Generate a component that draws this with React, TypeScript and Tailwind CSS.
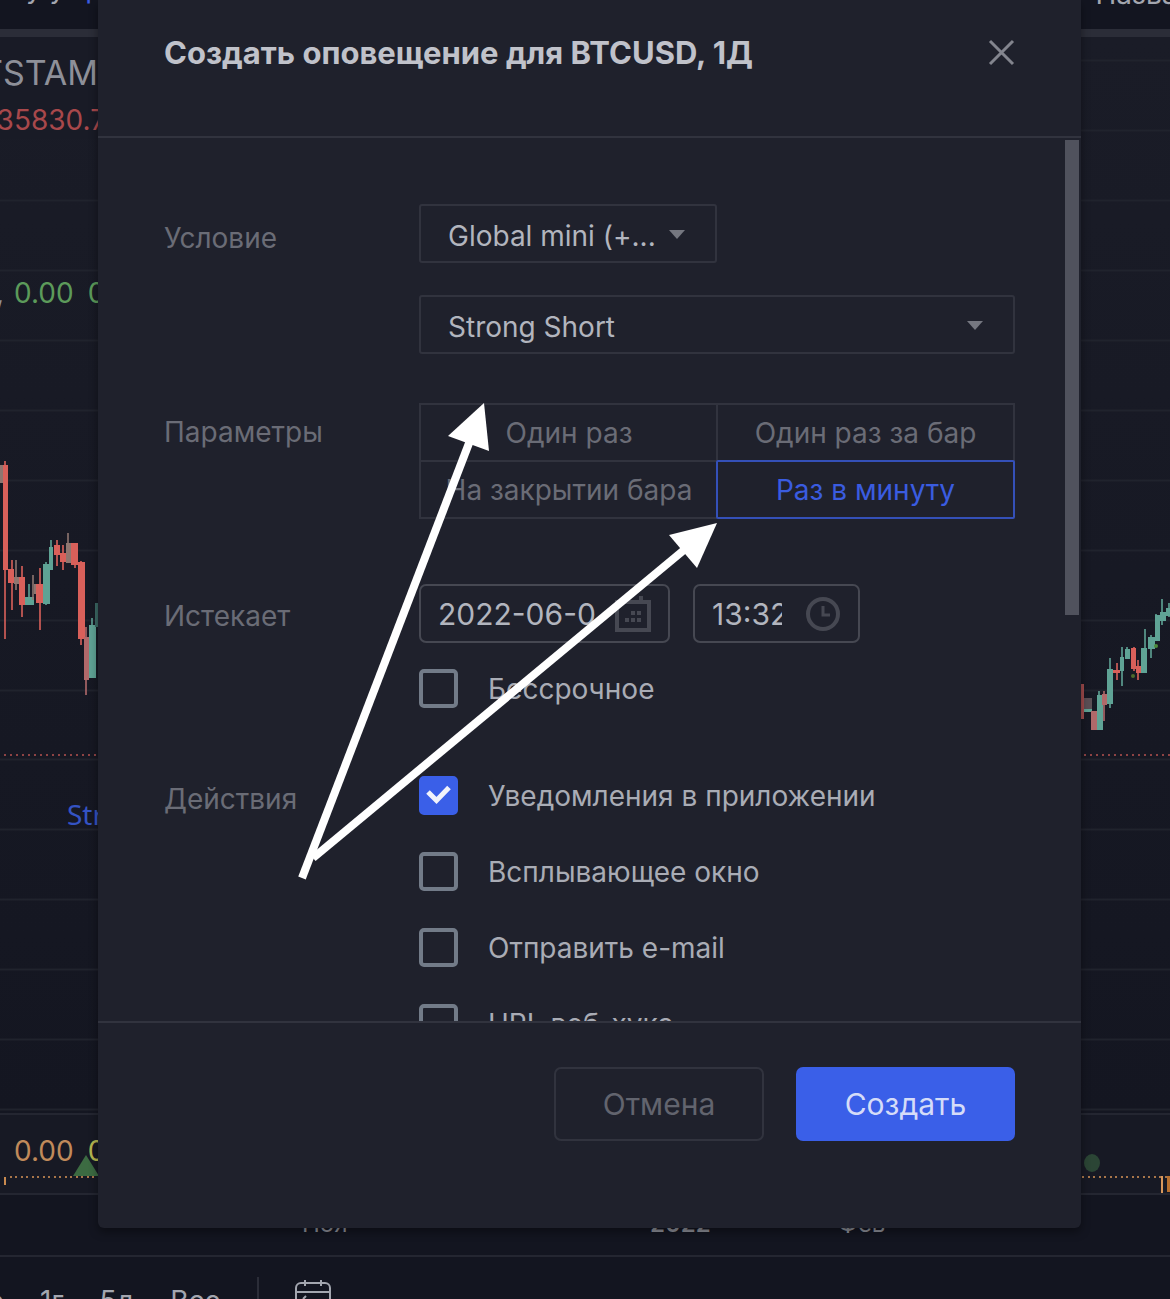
import React, { useState } from 'react';

interface Candle {
  x: number;
  w: number;
  top: number;
  bottom: number;
  wick?: [number, number, number];
  color: string;
}

const RED = '#d9605a';
const GREEN = '#5fa395';
const MUTED = '#8f7670';
const ROSE = '#b0696a';

const leftCandles: Candle[] = [
  { x: 0, w: 4, top: 428, bottom: 446, color: MUTED },
  { x: 3, w: 5, top: 428, bottom: 533, wick: [5, 424, 602], color: RED },
  { x: 8, w: 6, top: 532, bottom: 546, wick: [12, 523, 573], color: RED },
  { x: 14, w: 6, top: 540, bottom: 547, wick: [16, 523, 553], color: MUTED },
  { x: 19, w: 6, top: 540, bottom: 568, wick: [22, 529, 580], color: RED },
  { x: 25, w: 9, top: 560, bottom: 568, wick: [29, 547, 568], color: GREEN },
  { x: 34, w: 3, top: 547, bottom: 557, wick: [33, 538, 563], color: MUTED },
  { x: 36, w: 7, top: 547, bottom: 566, wick: [40, 531, 593], color: RED },
  { x: 43, w: 7, top: 527, bottom: 567, wick: [46, 525, 568], color: GREEN },
  { x: 49, w: 4, top: 510, bottom: 533, wick: [51, 503, 533], color: GREEN },
  { x: 54, w: 6, top: 508, bottom: 518, wick: [57, 503, 529], color: RED },
  { x: 60, w: 6, top: 516, bottom: 525, wick: [63, 508, 533], color: RED },
  { x: 66, w: 6, top: 506, bottom: 526, wick: [68, 496, 526], color: MUTED },
  { x: 71, w: 7, top: 506, bottom: 528, wick: [75, 506, 531], color: RED },
  { x: 78, w: 7, top: 525, bottom: 602, wick: [81, 524, 608], color: RED },
  { x: 84, w: 5, top: 600, bottom: 643, wick: [86, 590, 658], color: ROSE },
  { x: 89, w: 7, top: 588, bottom: 641, wick: [92, 581, 641], color: GREEN },
  { x: 95, w: 4, top: 566, bottom: 590, color: '#3d6a66' },
];

const rightCandles: Candle[] = [
  { x: 0, w: 3, top: 647, bottom: 682, color: '#a04b4c' },
  { x: 3, w: 8, top: 661, bottom: 673, color: '#5b4f55' },
  { x: 3, w: 8, top: 672, bottom: 675, color: GREEN },
  { x: 10, w: 6, top: 674, bottom: 693, color: ROSE },
  { x: 16, w: 6, top: 658, bottom: 693, wick: [18, 654, 693], color: GREEN },
  { x: 21, w: 5, top: 657, bottom: 668, wick: [23, 654, 684], color: ROSE },
  { x: 26, w: 6, top: 632, bottom: 667, wick: [29, 621, 671], color: GREEN },
  { x: 32, w: 7, top: 633, bottom: 636, wick: [36, 626, 643], color: RED },
  { x: 39, w: 4, top: 620, bottom: 634, wick: [41, 610, 649], color: GREEN },
  { x: 44, w: 5, top: 612, bottom: 622, wick: [46, 610, 622], color: GREEN },
  { x: 50, w: 5, top: 611, bottom: 632, wick: [53, 610, 634], color: RED },
  { x: 55, w: 5, top: 629, bottom: 636, wick: [57, 623, 643], color: RED },
  { x: 60, w: 6, top: 611, bottom: 636, wick: [64, 592, 636], color: GREEN },
  { x: 67, w: 7, top: 600, bottom: 612, wick: [70, 598, 621], color: GREEN },
  { x: 74, w: 5, top: 578, bottom: 604, wick: [75, 577, 604], color: GREEN },
  { x: 79, w: 6, top: 575, bottom: 584, wick: [81, 562, 588], color: GREEN },
  { x: 85, w: 4, top: 571, bottom: 579, wick: [88, 566, 580], color: GREEN },
];

const gridLines = [23, 93, 163, 233, 303, 373, 443, 513, 583, 653, 722, 792, 862, 932, 1002, 1072];

const Candles: React.FC<{ data: Candle[] }> = ({ data }) => (
  <>
    {data.map((c, index) => (
      <g key={index} fill={c.color}>
        {c.wick && <rect x={c.wick[0] - 1} y={c.wick[1]} width={2} height={c.wick[2] - c.wick[1]} opacity={0.8} />}
        <rect x={c.x} y={c.top} width={c.w} height={c.bottom - c.top} />
      </g>
    ))}
  </>
);

const ChartBackdrop: React.FC = () => (
  <div className="col-start-1 row-start-1 flex min-w-0 flex-col overflow-hidden bg-[#131520]">
    <div className="flex h-[29px] items-start justify-between overflow-hidden text-[28px] leading-[28px] text-[#a3a6af]">
      <div className="-mt-[26px] flex gap-5 pl-[26px]">
        <span>у у</span>
        <span className="text-[#3a5ce0]">µ</span>
      </div>
      <span className="-mt-5 -mr-6">Назван</span>
    </div>
    <div className="h-2 bg-[#2b2d38]" />

    <div className="relative min-h-[1076px] flex-1 bg-linear-to-b from-[#1a1c27] to-[#141621]">
      <svg className="absolute inset-0 h-full w-full" aria-hidden="true">
        {gridLines.map((y) => (
          <line key={y} x1="0" x2="100%" y1={y + 0.5} y2={y + 0.5} stroke="#20232d" strokeWidth="2" />
        ))}
        <line x1="4" x2="100%" y1="718" y2="718" stroke="#8e4344" strokeWidth="2" strokeDasharray="2 4" />
      </svg>
      <svg className="absolute top-0 left-0 h-full w-[98px]" aria-hidden="true">
        <Candles data={leftCandles} />
      </svg>
      <svg className="absolute top-0 right-0 h-full w-[89px]" aria-hidden="true">
        <Candles data={rightCandles} />
        <circle cx="52" cy="639" r="2" fill="#4d6b2c" />
        <circle cx="75" cy="609" r="2" fill="#4d8b3c" />
      </svg>
      <div className="relative flex w-[98px] flex-col items-end overflow-hidden bg-[#191b26] pt-4 whitespace-nowrap">
        <span className="text-[34px] leading-[40px] text-[#8e9099]">BITSTAM</span>
        <span className="-mr-2 pt-2 text-[28px] leading-[38px] text-[#a8484b]">35830.7</span>
      </div>
      <div className="relative mt-[136px] flex gap-[14px] text-[28px] leading-[36px] text-[#5c9a5a]">
        <span className="-ml-1 w-1 text-[#8e9099]">,</span>
        <span>0.00</span>
        <span>0.00</span>
      </div>
      <span className="absolute top-[759px] left-[67px] font-['Noto_Sans'] text-[28px] leading-[36px] text-[#3453c4]">
        Strong
      </span>
    </div>

    <div className="relative h-[82px] border-y-2 border-[#242631] bg-[#171924]">
      <svg className="absolute inset-0 h-full w-full" aria-hidden="true">
        <path d="M73 61 L86 40 L99 61 Z" fill="#3c6b42" />
        <line x1="10" x2="100%" y1="62" y2="62" stroke="#a9764a" strokeWidth="2" strokeDasharray="2 3 2 4" />
        <rect x="4" y="62" width="2" height="8" fill="#c98a4f" />
      </svg>
      <svg className="absolute top-0 right-0 h-full w-[89px]" aria-hidden="true">
        <ellipse cx="11" cy="48" rx="8" ry="9" fill="#2b4535" />
        <rect x="80" y="61" width="2" height="18" fill="#d9985c" />
        <rect x="86" y="61" width="3" height="16" fill="#b8702f" />
      </svg>
      <div className="relative flex gap-[14px] pt-[18px] pl-[14px] text-[28px] leading-[36px]">
        <span className="text-[#c08a5a]">0.00</span>
        <span className="text-[#b5b54f]">0.00</span>
      </div>
    </div>

    <div className="flex h-[60px] pt-[14px] pl-[302px] text-[24px] leading-[30px] text-[#8e9099]">
      <span className="w-[348px]">Ноя</span>
      <span className="w-[188px] font-semibold">2022</span>
      <span>Фев</span>
    </div>

    <div className="flex h-[45px] gap-9 overflow-hidden border-t-2 border-[#242631] pt-[28px] text-[28px] leading-[32px] text-[#a3a6af]">
      <span className="flex w-1 justify-end">о</span>
      <span>1г</span>
      <span>5д</span>
      <span>Все</span>
      <span className="-mt-2 h-10 w-[2px] bg-[#2b2d38]" />
      <svg className="-mt-[6px] h-9 w-9" viewBox="0 0 36 36" fill="none" stroke="#a3a6af" strokeWidth="2" aria-hidden="true">
        <rect x="1" y="4" width="34" height="30" rx="5" />
        <path d="M1 13h34M10 1v6M26 1v6M8 20l3-3" />
      </svg>
    </div>
  </div>
);

interface DropdownProps {
  label: string;
  value: string;
  wide?: boolean;
}

const Dropdown: React.FC<DropdownProps> = ({ label, value, wide }) => (
  <div className={wide ? 'relative w-full' : 'relative w-1/2'}>
    <select
      aria-label={label}
      className="block h-[59px] w-full appearance-none rounded-[3px] border-2 border-[#31333e] bg-transparent pt-1 pr-14 pl-[27px] text-[28px] text-[#b2b5be]"
    >
      <option>{value}</option>
    </select>
    <svg
      className="pointer-events-none absolute top-[26px] right-8 h-[9px] w-4"
      viewBox="0 0 16 9"
      aria-hidden="true"
    >
      <path d="M0 0h16L8 9z" fill="#757780" />
    </svg>
  </div>
);

interface CheckOptionProps {
  label: string;
  defaultChecked?: boolean;
}

const CheckOption: React.FC<CheckOptionProps> = ({ label, defaultChecked }) => (
  <label className="relative flex h-[39px] items-center gap-[30px] text-[28px] text-[#a9acb5]">
    <input
      type="checkbox"
      defaultChecked={defaultChecked}
      className="peer h-[39px] w-[39px] shrink-0 appearance-none rounded-[5px] border-4 border-[#727b88] checked:border-[#3a5fe8] checked:bg-[#3a5fe8]"
    />
    <svg
      className="pointer-events-none absolute top-0 left-0 hidden h-[39px] w-[39px] peer-checked:block"
      viewBox="0 0 39 39"
      fill="none"
      stroke="#f1f3fb"
      strokeWidth="5"
      aria-hidden="true"
    >
      <path d="M9 16l8.500 8.500L30 11.500" />
    </svg>
    <span>{label}</span>
  </label>
);

const frequencies = ['Один раз', 'Один раз за бар', 'На закрытии бара', 'Раз в минуту'];

const AlertDialog: React.FC = () => {
  const [frequency, setFrequency] = useState('Раз в минуту');

  return (
    <div
      role="dialog"
      aria-labelledby="alert-title"
      className="relative rounded-b-[6px] bg-[#1f212c] shadow-[0_4px_10px_rgba(0,0,0,0.4)]"
    >
      <header className="flex h-[138px] items-start justify-between border-b-2 border-[#31333e] px-[66px] pt-[34px]">
        <h1 id="alert-title" className="text-[31px] leading-[38px] font-bold text-[#c0c2ca]">
          Создать оповещение для BTCUSD, 1Д
        </h1>
        <button type="button" aria-label="Закрыть" className="mt-[5px]">
          <svg className="h-[27px] w-[27px]" viewBox="0 0 27 27" stroke="#83858e" strokeWidth="3" aria-hidden="true">
            <path d="M2 2l23 23M25 2L2 25" />
          </svg>
        </button>
      </header>

      <div className="relative h-[883px] overflow-hidden px-[66px] pt-[66px]">
        <div className="absolute top-[2px] right-[2px] h-[475px] w-[14px] bg-[#50525d]" />

        <div className="grid grid-cols-[255px_1fr] text-[28px] leading-[36px] text-[#6a6c76]">
          <span className="pt-4">Условие</span>
          <div className="flex flex-col gap-8">
            <Dropdown label="Условие" value="Global mini (+..." />
            <Dropdown label="Сигнал" value="Strong Short" wide />
          </div>

          <span className="pt-[60px]">Параметры</span>
          <div className="mt-[49px] grid grid-cols-2 pb-[2px]">
            {frequencies.map((item) => (
              <button
                key={item}
                type="button"
                onClick={() => setFrequency(item)}
                className={
                  item === frequency
                    ? 'relative -mb-[2px] -ml-px h-[59px] rounded-[2px] border-2 border-[#3450b8] whitespace-nowrap text-[#3a5ce0]'
                    : '-mb-[2px] h-[59px] border-2 border-[#31333e] whitespace-nowrap odd:border-r-0 even:-ml-px'
                }
              >
                {item}
              </button>
            ))}
          </div>

          <span className="pt-[79px]">Истекает</span>
          <div className="flex flex-col gap-[26px] pt-[65px]">
            <div className="flex gap-[23px]">
              <div className="flex h-[59px] w-[251px] items-center justify-between rounded-[7px] border-2 border-[#464852] px-[17px]">
                <input
                  type="text"
                  aria-label="Дата"
                  defaultValue="2022-06-07"
                  className="w-[158px] bg-transparent text-[30px] text-[#b2b5be]"
                />
                <svg className="h-9 w-9" viewBox="0 0 36 36" fill="none" stroke="#464852" strokeWidth="4" aria-hidden="true">
                  <path d="M2 6h32v28H2zM10 0v8M26 0v8" />
                  <path d="M16 17h4M22 17h4M10 24h4M16 24h4M22 24h4" />
                </svg>
              </div>
              <div className="flex h-[59px] w-[167px] items-center justify-between rounded-[7px] border-2 border-[#464852] px-[17px]">
                <input
                  type="text"
                  aria-label="Время"
                  defaultValue="13:32"
                  className="w-[70px] bg-transparent text-[30px] text-[#b2b5be]"
                />
                <svg className="h-9 w-9" viewBox="0 0 36 36" fill="none" stroke="#464852" strokeWidth="4" aria-hidden="true">
                  <circle cx="18" cy="18" r="15" />
                  <path d="M18 10v9h7" strokeWidth="3" />
                </svg>
              </div>
            </div>
            <CheckOption label="Бессрочное" />
          </div>

          <span className="pt-[73px]">Действия</span>
          <div className="flex flex-col gap-[37px] pt-[68px]">
            <CheckOption label="Уведомления в приложении" defaultChecked />
            <CheckOption label="Всплывающее окно" />
            <CheckOption label="Отправить e-mail" />
            <CheckOption label="URL веб-хука" />
          </div>
        </div>
      </div>

      <footer className="flex h-[207px] items-start justify-end gap-8 border-t-2 border-[#31333e] px-[66px] pt-[44px] text-[30px]">
        <button type="button" className="h-[74px] w-[210px] rounded-[7px] border-2 border-[#31333e] text-[#62646e]">
          Отмена
        </button>
        <button type="button" className="h-[74px] w-[219px] rounded-[7px] bg-[#3a5fe8] text-[#d5dcf8]">
          Создать
        </button>
      </footer>

      <svg className="pointer-events-none absolute top-[400px] left-[190px] h-[490px] w-[440px]" viewBox="288 400 440 490" aria-hidden="true">
        <g stroke="#fff" strokeWidth="8">
          <path d="M302 878L471 438" />
          <path d="M313 858L690 545" />
        </g>
        <path d="M484 403L448 436L489 451Z" fill="#fff" />
        <path d="M717 523L669 535L697 568Z" fill="#fff" />
      </svg>
    </div>
  );
};

export default function App() {
  return (
    <div className="grid min-h-screen grid-cols-1 overflow-hidden bg-[#131520] font-['Inter',sans-serif]">
      <ChartBackdrop />
      <div className="col-start-1 row-start-1 self-start pr-[89px] pl-[98px]">
        <AlertDialog />
      </div>
    </div>
  );
}
